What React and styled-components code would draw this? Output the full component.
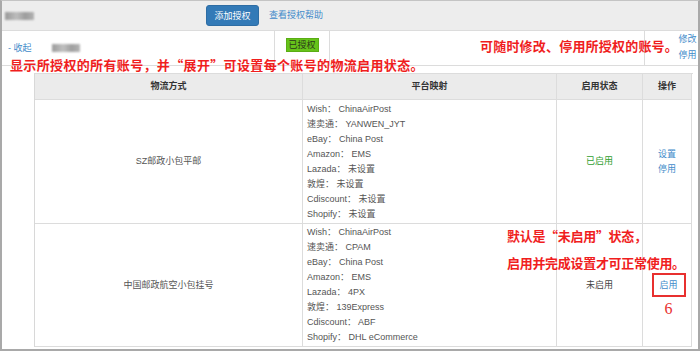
import React from 'react';
import styled, { createGlobalStyle } from 'styled-components';

const GlobalStyle = createGlobalStyle`
  body {
    margin: 0;
    background: #fff;
    font-family: "Liberation Sans", "Noto Sans CJK SC", Arial, sans-serif;
  }
`;

const Frame = styled.div`
  position: relative;
  width: 700px;
  height: 351px;
  box-sizing: border-box;
  border: 2px solid #a9a9a9;
  border-top: 1px solid #c4c4c4;
  overflow: hidden;
  font-size: 9px;
  line-height: 15px;
  color: #555;
`;

const TopBar = styled.div`
  display: grid;
  grid-template-columns: 204px auto 1fr;
  align-items: center;
  height: 29px;
  background: #ededed;
  border-bottom: 1px solid #dcdcdc;
`;

// stands in for the pixelated account names
const Blur = styled.span`
  display: inline-block;
  width: ${p => p.w}px;
  height: 8px;
  margin-left: ${p => p.ml || 0}px;
  background: linear-gradient(90deg, #8a8a8a, #b5b5b5 40%, #8f8f8f 70%, #a8a8a8);
  filter: blur(1.1px);
  opacity: 0.85;
`;

const PrimaryButton = styled.button`
  width: 53px;
  height: 21px;
  padding: 0;
  background: #337ab7;
  border: 1px solid #2e6da4;
  border-radius: 3px;
  color: #fff;
  font-family: inherit;
  font-size: 9px;
`;

const Link = styled.a`
  color: #428bca;
  text-decoration: none;
  cursor: pointer;
  margin-left: ${p => p.ml || 0}px;
`;

const AccountRow = styled.div`
  display: grid;
  grid-template-columns: 273px 55px 315px 1fr;
  height: 34px;
  border-bottom: 1px solid #dcdcdc;
`;

const AccountCell = styled.div`
  display: flex;
  align-items: ${p => (p.center ? 'flex-start' : 'center')};
  justify-content: ${p => (p.center ? 'center' : 'flex-start')};
  flex-direction: ${p => (p.stack ? 'column' : 'row')};
  padding: ${p => p.pad || '0'};
  border-right: ${p => (p.last ? 'none' : '1px solid #dcdcdc')};
  line-height: ${p => (p.stack ? '16px' : '15px')};
`;

const Badge = styled.span`
  display: inline-block;
  width: 33px;
  height: 14px;
  box-sizing: border-box;
  background: #66c31a;
  border: 1px solid #5aad14;
  color: #2b3a1a;
  font-size: 9px;
  line-height: 12px;
  text-align: center;
`;

const Expanded = styled.div`
  padding: 7px 0 0 32px;
`;

const Table = styled.div`
  display: grid;
  grid-template-columns: 268px 254px 86px 49px;
  grid-template-rows: 26px 124px 123px;
  width: 658px;
  border-left: 1px solid #d8d8d8;
  border-top: 1px solid #dcdcdc;
`;

const Cell = styled.div`
  display: flex;
  flex-direction: column;
  align-items: ${p => (p.left ? 'flex-start' : 'center')};
  justify-content: center;
  padding: ${p => (p.left ? '2px 4px' : '0')};
  border-right: 1px solid #dcdcdc;
  border-bottom: 1px solid #dcdcdc;
  background: ${p => (p.head ? '#ebebeb' : '#fff')};
  font-weight: ${p => (p.head ? 'bold' : 'normal')};
  color: ${p => (p.head ? '#333' : p.color || '#555')};
`;

const Highlight = styled.span`
  position: relative;
  display: flex;
  align-items: center;
  justify-content: center;
  width: 34px;
  height: 24px;
  box-sizing: border-box;
  border: 2px solid #e8302f;
  margin-left: 3px;
`;

const StepNumber = styled.span`
  position: absolute;
  top: 26px;
  left: 11px;
  color: #e8302f;
  font-family: "Liberation Serif", serif;
  font-size: 16px;
  line-height: 16px;
`;

const Note = styled.div`
  position: absolute;
  left: ${p => p.x}px;
  top: ${p => p.y}px;
  color: #f01e1e;
  font-family: "Noto Sans CJK SC", sans-serif;
  font-weight: bold;
  font-size: 13px;
  line-height: ${p => p.lh || 16}px;
  letter-spacing: ${p => p.ls || 0}px;
  white-space: nowrap;
`;

const rows = [
  {
    name: 'SZ邮政小包平邮',
    mappings: [
      ['Wish', 'ChinaAirPost'],
      ['速卖通', 'YANWEN_JYT'],
      ['eBay', 'China Post'],
      ['Amazon', 'EMS'],
      ['Lazada', '未设置'],
      ['敦煌', '未设置'],
      ['Cdiscount', '未设置'],
      ['Shopify', '未设置'],
    ],
    enabled: true,
  },
  {
    name: '中国邮政航空小包挂号',
    mappings: [
      ['Wish', 'ChinaAirPost'],
      ['速卖通', 'CPAM'],
      ['eBay', 'China Post'],
      ['Amazon', 'EMS'],
      ['Lazada', '4PX'],
      ['敦煌', '139Express'],
      ['Cdiscount', 'ABF'],
      ['Shopify', 'DHL eCommerce'],
    ],
    enabled: false,
  },
];

export default function App() {
  return (
    <>
      <GlobalStyle />
      <Frame>
        <TopBar>
          <Blur w={29} ml={3} />
          <PrimaryButton>添加授权</PrimaryButton>
          <Link ml={10}>查看授权帮助</Link>
        </TopBar>

        <AccountRow>
          <AccountCell pad="0 0 0 6px">
            <Link>- 收起</Link>
            <Blur w={28} ml={20} />
          </AccountCell>
          <AccountCell center pad="7px 0 0">
            <Badge>已授权</Badge>
          </AccountCell>
          <AccountCell />
          <AccountCell last stack pad="0 0 0 32px">
            <Link>修改</Link>
            <Link>停用</Link>
          </AccountCell>
        </AccountRow>

        <Expanded>
          <Table>
            <Cell head>物流方式</Cell>
            <Cell head>平台映射</Cell>
            <Cell head>启用状态</Cell>
            <Cell head>操作</Cell>
            {rows.map(row => (
              <React.Fragment key={row.name}>
                <Cell>{row.name}</Cell>
                <Cell left>
                  {row.mappings.map(([platform, value]) => (
                    <span key={platform}>
                      {platform}： {value}
                    </span>
                  ))}
                </Cell>
                <Cell color={row.enabled ? '#2f9e2f' : '#444'}>
                  {row.enabled ? '已启用' : '未启用'}
                </Cell>
                <Cell>
                  {row.enabled ? (
                    <>
                      <Link>设置</Link>
                      <Link>停用</Link>
                    </>
                  ) : (
                    <Highlight>
                      <Link>启用</Link>
                      <StepNumber>6</StepNumber>
                    </Highlight>
                  )}
                </Cell>
              </React.Fragment>
            ))}
          </Table>
        </Expanded>

        <Note x={478} y={37} ls={0.2}>可随时修改、停用所授权的账号。</Note>
        <Note x={8} y={56} ls={0.35}>
          显示所授权的所有账号，并“展开”可设置每个账号的物流启用状态。
        </Note>
        <Note x={505} y={221} lh={27} ls={-0.3}>
          默认是“未启用”状态，
          <br />
          启用并完成设置才可正常使用。
        </Note>
      </Frame>
    </>
  );
}
